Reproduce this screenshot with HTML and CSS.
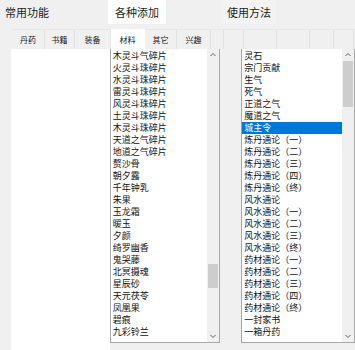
FILE: index.html
```html
<!DOCTYPE html>
<html>
<head>
<meta charset="utf-8">
<link rel="stylesheet" href="styles.css">
</head>
<body>
<div class="topbar">
  <div class="ttab t1">常用功能</div>
  <div class="ttab t2">各种添加</div>
  <div class="ttab t3">使用方法</div>
</div>
<div class="subtabs">
  <div class="stab s1">丹药</div>
  <div class="stab s2">书籍</div>
  <div class="stab s3">装备</div>
  <div class="stab s4 sel">材料</div>
  <div class="stab s5">其它</div>
  <div class="stab s6">兴趣</div>
  <div class="cell w12"></div>
  <div class="cell w20"></div>
  <div class="cell w33"></div>
  <div class="cell w33"></div>
  <div class="cell w24"></div>
  <div class="cell w20"></div>
</div>
<div class="main">
  <div class="leftpane"></div>
  <div class="listbox lb1">
    <div class="items">
      <div class="item">木灵斗气碎片</div>
      <div class="item">火灵斗珠碎片</div>
      <div class="item">水灵斗珠碎片</div>
      <div class="item">雷灵斗珠碎片</div>
      <div class="item">风灵斗珠碎片</div>
      <div class="item">土灵斗珠碎片</div>
      <div class="item">木灵斗珠碎片</div>
      <div class="item">天道之气碎片</div>
      <div class="item">地道之气碎片</div>
      <div class="item">赘沙骨</div>
      <div class="item">朝夕露</div>
      <div class="item">千年钟乳</div>
      <div class="item">朱果</div>
      <div class="item">玉龙霜</div>
      <div class="item">暖玉</div>
      <div class="item">夕颜</div>
      <div class="item">绮罗幽香</div>
      <div class="item">鬼哭藤</div>
      <div class="item">北冥摄魂</div>
      <div class="item">星辰砂</div>
      <div class="item">天元茯苓</div>
      <div class="item">凤凰果</div>
      <div class="item">碧痕</div>
      <div class="item">九彩铃兰</div>
    </div>
    <div class="sbar">
      <svg class="arr" width="12" height="12" viewBox="0 0 12 12"><path d="M3.5 7 L6 4.5 L8.5 7" fill="none" stroke="#606060" stroke-width="1"/></svg>
      <div class="track t-bottom"><div class="thumb th1"></div></div>
      <svg class="arr" width="12" height="12" viewBox="0 0 12 12"><path d="M3.5 5 L6 7.5 L8.5 5" fill="none" stroke="#606060" stroke-width="1"/></svg>
    </div>
  </div>
  <div class="gap"></div>
  <div class="listbox lb2">
    <div class="items">
      <div class="item">灵石</div>
      <div class="item">宗门贡献</div>
      <div class="item">生气</div>
      <div class="item">死气</div>
      <div class="item">正道之气</div>
      <div class="item">魔道之气</div>
      <div class="item selected">城主令</div>
      <div class="item">炼丹通论（一）</div>
      <div class="item">炼丹通论（二）</div>
      <div class="item">炼丹通论（三）</div>
      <div class="item">炼丹通论（四）</div>
      <div class="item">炼丹通论（终）</div>
      <div class="item">风水通论</div>
      <div class="item">风水通论（一）</div>
      <div class="item">风水通论（二）</div>
      <div class="item">风水通论（三）</div>
      <div class="item">风水通论（终）</div>
      <div class="item">药材通论（一）</div>
      <div class="item">药材通论（二）</div>
      <div class="item">药材通论（三）</div>
      <div class="item">药材通论（四）</div>
      <div class="item">药材通论（终）</div>
      <div class="item">一封家书</div>
      <div class="item">一箱丹药</div>
    </div>
    <div class="sbar">
      <svg class="arr" width="12" height="12" viewBox="0 0 12 12"><path d="M3.5 7 L6 4.5 L8.5 7" fill="none" stroke="#606060" stroke-width="1"/></svg>
      <div class="track t-top"><div class="thumb th2"></div></div>
      <svg class="arr" width="12" height="12" viewBox="0 0 12 12"><path d="M3.5 5 L6 7.5 L8.5 5" fill="none" stroke="#606060" stroke-width="1"/></svg>
    </div>
  </div>
</div>
</body>
</html>
```

FILE: styles.css
```css
html, body {
  margin: 0;
  padding: 0;
  background: #f0f0f0;
  font-family: "Noto Sans CJK SC", "Microsoft YaHei", sans-serif;
  color: #1a1a1a;
  overflow: hidden;
  width: 355px;
  height: 350px;
}
.topbar {
  display: flex;
  height: 24px;
  font-size: 11px;
}
.ttab {
  display: flex;
  align-items: center;
  justify-content: center;
  height: 24px;
}
.t1 {
  width: 52px;
  justify-content: flex-start;
  padding-left: 5px;
  margin-right: 51px;
}
.t2 {
  width: 58px;
  background: #ffffff;
}
.t3 {
  width: 54px;
  margin-left: 56px;
  background: #f3f3f3;
}
.subtabs {
  display: flex;
  height: 19px;
  margin-top: 5px;
  margin-left: 12px;
  border-top: 1px solid #e6e6e6;
  font-size: 8px;
}
.stab {
  border-right: 1px solid #e2e2e2;
  display: flex;
  align-items: center;
  justify-content: center;
  color: #222;
}
.s1 { width: 32px; }
.s2 { width: 29px; }
.s3 { width: 35px; }
.s4 { width: 33px; }
.s5 { width: 31px; }
.s6 { width: 33px; }
.stab.sel {
  background: #ffffff;
  border-right-color: #ffffff;
  margin-top: -1px;
}
.cell {
  border-right: 1px solid #e2e2e2;
}
.w12 { width: 12px; }
.w20 { width: 19px; }
.w24 { width: 23px; }
.w33 { width: 32px; }
.main {
  display: flex;
  height: 306px;
  margin-left: 11px;
}
.leftpane {
  width: 99px;
  background: #ffffff;
}
.listbox {
  display: flex;
  height: 294px;
  background: #ffffff;
  border: 1px solid #a8a8a8;
  border-top: none;
  box-sizing: border-box;
}
.lb1 {
  width: 111px;
}
.gap {
  width: 21px;
}
.lb2 {
  width: 114px;
}
.items {
  flex: 1;
  padding-top: 1px;
  overflow: hidden;
}
.item {
  height: 12px;
  line-height: 12px;
  font-size: 9px;
  padding-left: 2px;
  white-space: nowrap;
  color: #111;
}
.item.selected {
  background: #0078d7;
  color: #ffffff;
}
.sbar {
  width: 12px;
  background: #f0f0f0;
  display: flex;
  flex-direction: column;
}
.arr {
  display: block;
  flex: none;
}
.track {
  flex: 1;
  display: flex;
  flex-direction: column;
  padding: 0 1px;
}
.t-bottom {
  justify-content: flex-end;
  padding-bottom: 42px;
}
.t-top {
  justify-content: flex-start;
}
.thumb {
  background: #cdcdcd;
}
.th1 {
  height: 24px;
}
.th2 {
  height: 46px;
}
```
